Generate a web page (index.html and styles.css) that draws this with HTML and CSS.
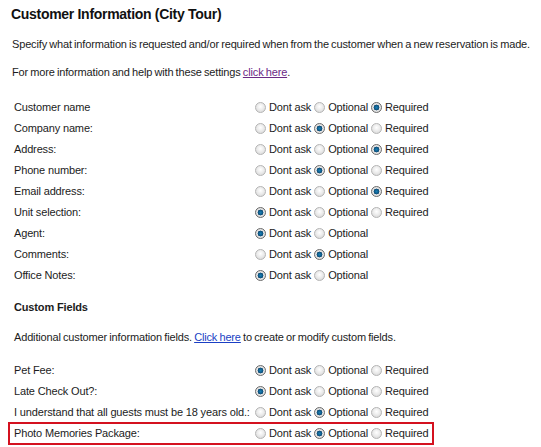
FILE: index.html
```html
<!DOCTYPE html>
<html>
<head>
<meta charset="utf-8">
<link rel="stylesheet" href="styles.css">
</head>
<body>
<div class="page">
  <h1 class="title">Customer Information (City Tour)</h1>
  <p class="intro">Specify what information is requested and/or required when from the customer when a new reservation is made.</p>
  <p class="intro second">For more information and help with these settings <a class="visited" href="#">click here</a>.</p>

  <div class="rows first-rows">
    <div class="row"><span class="label">Customer name</span><span class="opts"><span class="r"></span>Dont ask<span class="r"></span>Optional<span class="r on"></span>Required</span></div>
    <div class="row"><span class="label">Company name:</span><span class="opts"><span class="r"></span>Dont ask<span class="r on"></span>Optional<span class="r"></span>Required</span></div>
    <div class="row"><span class="label">Address:</span><span class="opts"><span class="r"></span>Dont ask<span class="r"></span>Optional<span class="r on"></span>Required</span></div>
    <div class="row"><span class="label">Phone number:</span><span class="opts"><span class="r"></span>Dont ask<span class="r on"></span>Optional<span class="r"></span>Required</span></div>
    <div class="row"><span class="label">Email address:</span><span class="opts"><span class="r"></span>Dont ask<span class="r"></span>Optional<span class="r on"></span>Required</span></div>
    <div class="row"><span class="label">Unit selection:</span><span class="opts"><span class="r on"></span>Dont ask<span class="r"></span>Optional<span class="r"></span>Required</span></div>
    <div class="row"><span class="label">Agent:</span><span class="opts"><span class="r on"></span>Dont ask<span class="r"></span>Optional</span></div>
    <div class="row"><span class="label">Comments:</span><span class="opts"><span class="r"></span>Dont ask<span class="r on"></span>Optional</span></div>
    <div class="row"><span class="label">Office Notes:</span><span class="opts"><span class="r on"></span>Dont ask<span class="r"></span>Optional</span></div>
  </div>

  <h2 class="subtitle">Custom Fields</h2>
  <p class="custom-intro">Additional customer information fields. <a class="link" href="#">Click here</a> to create or modify custom fields.</p>

  <div class="rows custom-rows">
    <div class="row"><span class="label">Pet Fee:</span><span class="opts"><span class="r on"></span>Dont ask<span class="r"></span>Optional<span class="r"></span>Required</span></div>
    <div class="row"><span class="label">Late Check Out?:</span><span class="opts"><span class="r on"></span>Dont ask<span class="r"></span>Optional<span class="r"></span>Required</span></div>
    <div class="row"><span class="label">I understand that all guests must be 18 years old.:</span><span class="opts"><span class="r"></span>Dont ask<span class="r on"></span>Optional<span class="r"></span>Required</span></div>
    <div class="row highlight"><span class="label">Photo Memories Package:</span><span class="opts"><span class="r"></span>Dont ask<span class="r on"></span>Optional<span class="r"></span>Required</span></div>
  </div>
</div>
</body>
</html>
```

FILE: styles.css
```css
html, body {
  margin: 0;
  padding: 0;
  background: #ffffff;
}

body {
  font-family: "Liberation Sans", Arial, sans-serif;
  font-size: 11px;
  letter-spacing: -0.15px;
  color: #1c1c1c;
}

.page {
  display: flex;
  flex-direction: column;
  align-items: flex-start;
  padding-top: 6px;
}

.title {
  margin: 0 0 0 11px;
  font-size: 14px;
  line-height: 17px;
  font-weight: bold;
  letter-spacing: -0.3px;
  color: #111;
}

.intro {
  margin: 14px 0 0 12px;
  line-height: 14px;
  white-space: nowrap;
  word-spacing: -0.7px;
}

.intro.second {
  margin-top: 14px;
}

.visited {
  color: #6b2a86;
}

.link {
  color: #1a3fc4;
}

.rows {
  display: flex;
  flex-direction: column;
  margin-left: 8px;
}

.first-rows {
  margin-top: 18px;
}

.custom-rows {
  margin-top: 16px;
}

.row {
  display: grid;
  grid-template-columns: 238px auto;
  align-items: center;
  width: 426px;
  height: 21px;
  box-sizing: border-box;
  border: 2px solid transparent;
  padding-left: 4px;
  line-height: 17px;
}

.row.highlight {
  border-color: #d4111f;
  height: 23px;
  margin-top: -1px;
}

.label {
  white-space: nowrap;
}

.opts {
  display: flex;
  align-items: center;
  white-space: nowrap;
}

.r {
  display: inline-block;
  width: 11px;
  height: 11px;
  box-sizing: border-box;
  border-radius: 50%;
  border: 1px solid #b4b4b4;
  background: radial-gradient(circle at 50% 40%, #ffffff 0%, #ececec 45%, #d2d2d2 100%);
  margin: 0 3px 0 3px;
  flex: none;
}

.r.on {
  border-color: #6a6a6a;
  background: radial-gradient(circle at 50% 50%, #1b7fb4 0%, #0e5b8a 32%, #0b3f66 42%, #e8e8e8 50%, #d0d0d0 100%);
}

.subtitle {
  margin: 14px 0 0 14px;
  font-size: 11px;
  line-height: 14px;
  font-weight: bold;
}

.custom-intro {
  margin: 16px 0 0 14px;
  line-height: 14px;
  word-spacing: -0.7px;
}
```
